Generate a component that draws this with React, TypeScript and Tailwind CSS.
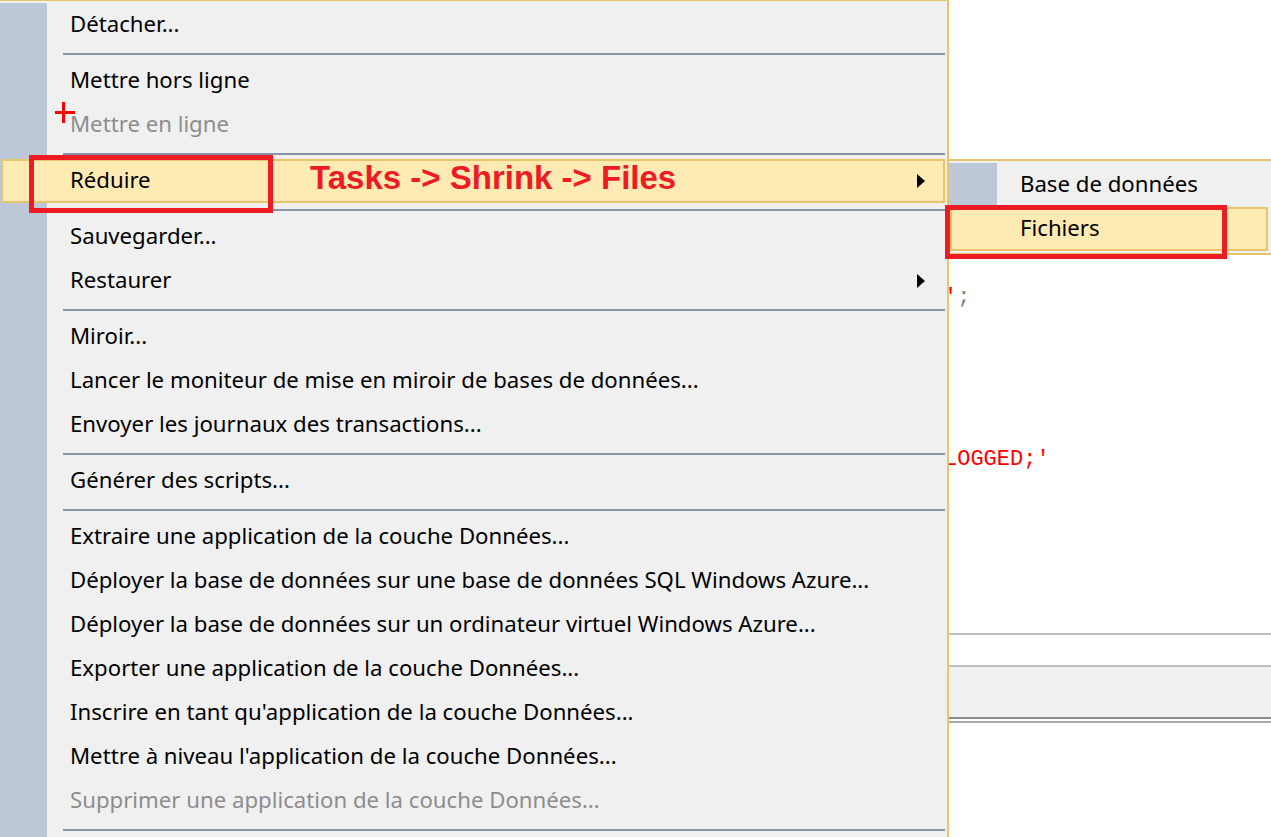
import React from 'react';

type Entry =
  | { kind: 'item'; label: string; disabled?: boolean; sub?: boolean; active?: boolean }
  | { kind: 'sep' };

const entries: Entry[] = [
  { kind: 'item', label: 'Détacher...' },
  { kind: 'sep' },
  { kind: 'item', label: 'Mettre hors ligne' },
  { kind: 'item', label: 'Mettre en ligne', disabled: true },
  { kind: 'sep' },
  { kind: 'item', label: 'Réduire', sub: true, active: true },
  { kind: 'sep' },
  { kind: 'item', label: 'Sauvegarder...' },
  { kind: 'item', label: 'Restaurer', sub: true },
  { kind: 'sep' },
  { kind: 'item', label: 'Miroir...' },
  { kind: 'item', label: 'Lancer le moniteur de mise en miroir de bases de données...' },
  { kind: 'item', label: 'Envoyer les journaux des transactions...' },
  { kind: 'sep' },
  { kind: 'item', label: 'Générer des scripts...' },
  { kind: 'sep' },
  { kind: 'item', label: 'Extraire une application de la couche Données...' },
  { kind: 'item', label: 'Déployer la base de données sur une base de données SQL Windows Azure...' },
  { kind: 'item', label: 'Déployer la base de données sur un ordinateur virtuel Windows Azure...' },
  { kind: 'item', label: 'Exporter une application de la couche Données...' },
  { kind: 'item', label: "Inscrire en tant qu'application de la couche Données..." },
  { kind: 'item', label: "Mettre à niveau l'application de la couche Données..." },
  { kind: 'item', label: 'Supprimer une application de la couche Données...', disabled: true },
  { kind: 'sep' },
];

const menuFont = "font-['Segoe_UI','Noto_Sans',sans-serif] text-[22.2px]";

function Arrow() {
  return (
    <svg width="8" height="14" viewBox="0 0 8 14" className="absolute left-[917px] top-1/2 -translate-y-1/2">
      <polygon points="0,0 8,7 0,14" fill="#000" />
    </svg>
  );
}

function MenuRow({ label, disabled, sub, active }: { label: string; disabled?: boolean; sub?: boolean; active?: boolean }) {
  if (active) {
    return (
      <div className="relative h-[44px]">
        <div className="ml-[1px] flex h-[44px] w-[944px] items-center border-2 border-[#e8c46a] bg-[#feeab3] pb-[2px] pl-[67px] text-black">
          {label}
        </div>
        {sub && <Arrow />}
      </div>
    );
  }
  return (
    <div className={`relative flex h-[44px] items-center pb-[2px] pl-[70px] ${disabled ? 'text-[#8d8d8d]' : 'text-black'}`}>
      {label}
      {sub && <Arrow />}
    </div>
  );
}

function Separator() {
  return (
    <div className="h-[12px] pl-[63px] pr-[2px] pt-[6px]">
      <div className="h-[2px] bg-[#8a93a6]" />
    </div>
  );
}

export default function App() {
  return (
    <div className="relative h-[837px] w-[1271px] overflow-hidden bg-white">
      <div className="flex h-full">
        {/* context menu */}
        <div className={`h-full w-[949px] shrink-0 border-r-2 border-t border-[#e8c46a] bg-[#f0f0f0] pt-[2px] ${menuFont}`}>
          <div className="h-full bg-[linear-gradient(to_right,#bcc7d8_47px,#f0f0f0_47px)]">
            {entries.map((e, i) =>
              e.kind === 'sep' ? <Separator key={i} /> : <MenuRow key={i} {...e} />
            )}
          </div>
        </div>

        {/* editor behind the menu */}
        <div className="flex min-w-0 flex-1 flex-col overflow-hidden font-['Liberation_Mono',monospace] text-[22px] leading-[26px]">
          <div className="ml-[-5px] mt-[285px] whitespace-pre">
            <span className="text-[#ff0000]">'</span>
            <span className="text-[#808080]">;</span>
          </div>
          <div className="ml-[-5px] mt-[136px] whitespace-pre text-[#ff0000]">LOGGED;'</div>
          <div className="mt-[160px] h-[2px] bg-[#c0c0c0]" />
          <div className="h-[30px]" />
          <div className="h-[2px] bg-[#c0c0c0]" />
          <div className="h-[50px] bg-[#f0f0f0]" />
          <div className="h-[2px] bg-[#8a8a93]" />
          <div className="h-[2px]" />
          <div className="h-[2px] bg-[#a9a9a9]" />
        </div>
      </div>

      {/* submenu */}
      <div className={`absolute left-[949px] top-[159px] w-[330px] border-y-2 border-[#e8c46a] bg-[#f0f0f0] py-[2px] ${menuFont}`}>
        <div className="bg-[linear-gradient(to_right,#bcc7d8_48px,#f0f0f0_48px)]">
          <div className="flex h-[44px] items-center pb-[2px] pl-[71px] text-black">Base de données</div>
          <div className="ml-[1px] flex h-[44px] w-[318px] items-center border-2 border-[#e8c46a] bg-[#feeab3] pb-[2px] pl-[68px] text-black">
            Fichiers
          </div>
        </div>
      </div>

      {/* annotations */}
      <div className="absolute left-[55px] top-[102px] h-[21px] w-[20px]">
        <div className="absolute left-0 top-[9px] h-[3px] w-[20px] bg-[#ff0000]" />
        <div className="absolute left-[7px] top-0 h-[21px] w-[3px] bg-[#ff0000]" />
      </div>
      <div className="absolute left-[29px] top-[155px] h-[58px] w-[244px] border-[5px] border-[#ed1c24]" />
      <div className="absolute left-[945px] top-[205px] h-[54px] w-[282px] border-[5px] border-[#ed1c24]" />
      <div className="absolute left-[310px] top-[161px] font-['Liberation_Sans',Arial,sans-serif] text-[33px] font-bold leading-none text-[#ed1c24]">
        Tasks -&gt; Shrink -&gt; Files
      </div>
    </div>
  );
}
